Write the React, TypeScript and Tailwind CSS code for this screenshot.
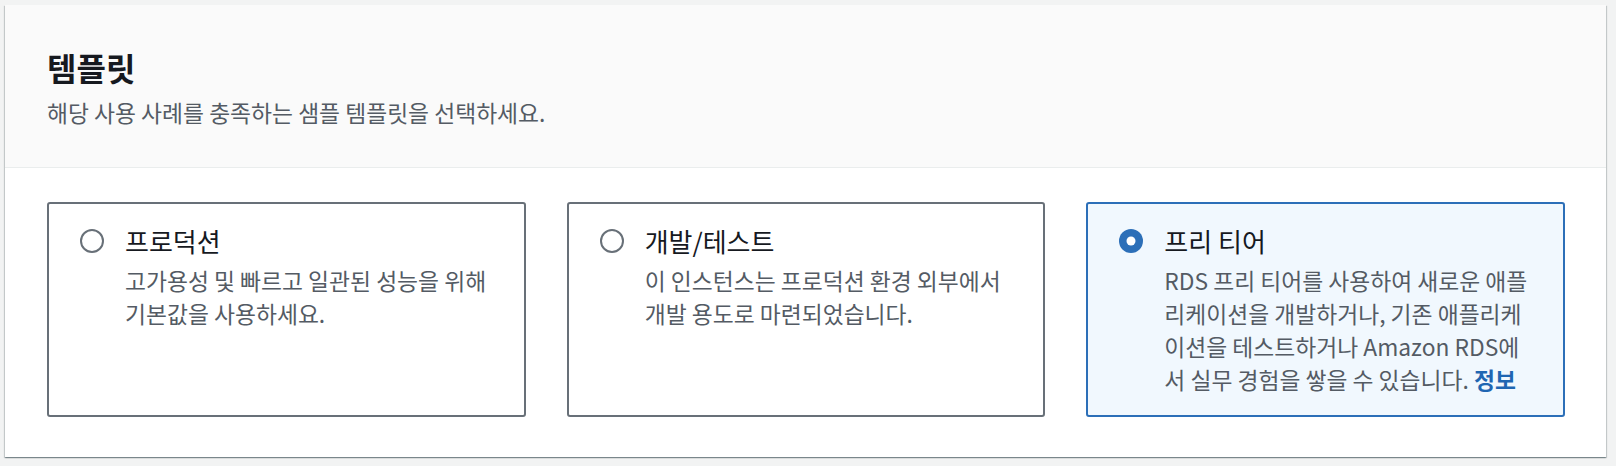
import React from "react";

const FONT = "font-['Noto_Sans_CJK_KR','Noto_Sans',sans-serif]";

function Radio({ checked }: { checked: boolean }) {
  return (
    <svg width="24" height="24" viewBox="0 0 24 24" className="shrink-0">
      {checked ? (
        <>
          <circle cx="12" cy="12" r="12" fill="#2c6fb8" />
          <circle cx="12" cy="12" r="4.5" fill="#ffffff" />
        </>
      ) : (
        <circle cx="12" cy="12" r="11" fill="none" stroke="#687078" strokeWidth="2" />
      )}
    </svg>
  );
}

function Card({
  title,
  lines,
  checked,
}: {
  title: string;
  lines: React.ReactNode[];
  checked: boolean;
}) {
  return (
    <div
      className={
        checked
          ? "h-[215px] rounded-[3px] border-2 border-[#2c6fb8] bg-[#f1f8fe] pl-[31px] pt-[20px] flex gap-[21px]"
          : "h-[215px] rounded-[3px] border-2 border-[#687078] bg-white pl-[31px] pt-[20px] flex gap-[21px]"
      }
    >
      <div className="h-[33px] flex items-center">
        <Radio checked={checked} />
      </div>
      <div>
        <div className="text-[26px] leading-[33px] text-[#16191f]">{title}</div>
        <div className="mt-[7px] text-[22.8px] leading-[33px] text-[#545b64]">
          {lines.map((l, i) => (
            <div key={i} className="whitespace-nowrap">
              {l}
            </div>
          ))}
        </div>
      </div>
    </div>
  );
}

export default function App() {
  return (
    <div className={`h-[466px] bg-[#f2f3f3] pt-[5px] pl-[5px] ${FONT}`}>
      <div className="w-[1601px] h-[452px] bg-white shadow-[0_1px_1px_0_rgba(0,28,36,0.3),1px_1px_1px_0_rgba(0,28,36,0.15),-1px_1px_1px_0_rgba(0,28,36,0.15)]">
        <div className="h-[163px] bg-[#fafafa] border-b border-[#eaeded] pl-[42px] pt-[44px]">
          <h2 className="text-[32px] leading-[36px] font-bold text-[#16191f]">템플릿</h2>
          <p className="mt-[11px] text-[22.8px] leading-[33px] text-[#545b64]">
            해당 사용 사례를 충족하는 샘플 템플릿을 선택하세요.
          </p>
        </div>
        <div className="grid grid-cols-3 gap-[41px] pl-[42px] pr-[41px] pt-[34px]">
          <Card
            checked={false}
            title="프로덕션"
            lines={["고가용성 및 빠르고 일관된 성능을 위해", "기본값을 사용하세요."]}
          />
          <Card
            checked={false}
            title="개발/테스트"
            lines={["이 인스턴스는 프로덕션 환경 외부에서", "개발 용도로 마련되었습니다."]}
          />
          <Card
            checked={true}
            title="프리 티어"
            lines={[
              "RDS 프리 티어를 사용하여 새로운 애플",
              "리케이션을 개발하거나, 기존 애플리케",
              "이션을 테스트하거나 Amazon RDS에",
              <>
                서 실무 경험을 쌓을 수 있습니다.{" "}
                <span className="font-bold text-[#1f66b2]">정보</span>
              </>,
            ]}
          />
        </div>
      </div>
    </div>
  );
}
